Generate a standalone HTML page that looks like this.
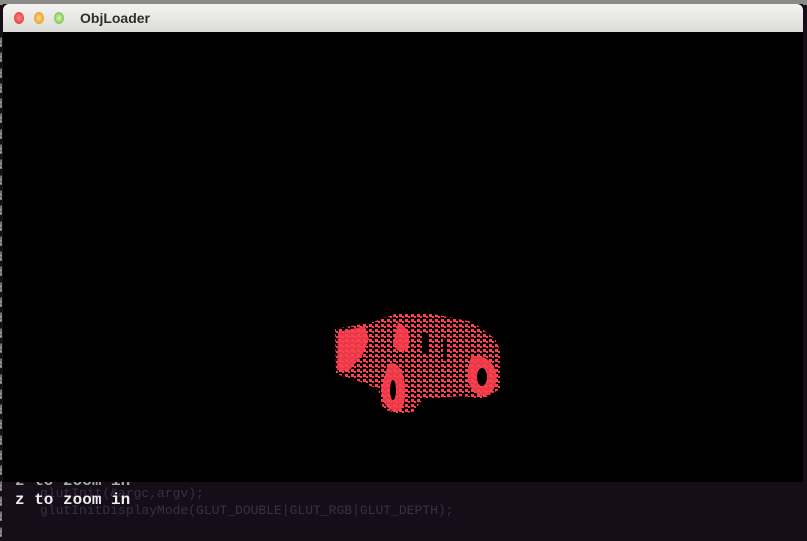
<!DOCTYPE html>
<html><head><style>
body{margin:0;width:807px;height:512px;overflow:hidden;background:#150e18;position:relative;font-family:"Liberation Sans",sans-serif}
.top{position:absolute;left:0;top:0;width:807px;height:5px;background:#8a8a86}
.win{position:absolute;left:3px;top:4px;width:800px;height:478px;background:#000}
.tb{position:absolute;left:0;top:0;width:800px;height:28px;background:linear-gradient(#f3f3f2,#dcdcd9);border-radius:6px 6px 0 0}
.b{position:absolute;top:8px;width:10px;height:12px;border-radius:50%}
.title{position:absolute;left:77px;top:6px;font-weight:bold;font-size:14px;color:#2e2e2e}
.term{position:absolute;font-family:"Liberation Mono",monospace;font-weight:bold;font-size:16px;color:#eee;white-space:pre}
.code{position:absolute;left:40px;font-family:"Liberation Mono",monospace;font-size:13px;color:#3a2f44;white-space:pre}
.ld{position:absolute;left:-5px;width:9px;font-family:"Liberation Mono",monospace;font-size:13px;line-height:15.3px;color:#bbb;top:36px;white-space:pre}
</style></head><body>
<div class="top"></div>
<div class="ld">d
d
d
d
d
d
d
d
d
d
d
d
d
d
d
d
d
d
d
d
d
d
d
d
d
d
d
d
d
d
d
d
d</div>
<div class="term" style="left:15px;top:472px;color:#aaa">z to zoom in</div>
<div class="code" style="top:486px">glutInit(&amp;argc,argv);</div>
<div class="term" style="left:15px;top:491px">z to zoom in</div>
<div class="code" style="top:503px">glutInitDisplayMode(GLUT_DOUBLE|GLUT_RGB|GLUT_DEPTH);</div>
<div class="win">
<div class="tb">
<div class="b" style="left:11px;background:radial-gradient(#f88,#d22)"></div>
<div class="b" style="left:31px;background:radial-gradient(#fd8,#d80)"></div>
<div class="b" style="left:51px;background:radial-gradient(#cfa,#6a3)"></div>
<div class="title">ObjLoader</div>
</div>
<svg width="800" height="478" style="position:absolute;left:0;top:0">
<defs>
<pattern id="p" width="6" height="5" patternUnits="userSpaceOnUse"><rect width="3" height="3" fill="#ff4050"/><rect x="3" y="2" width="2" height="2" fill="#ff4050"/></pattern>
</defs>
<g fill="url(#p)">
<path d="M332 325 L370 318 L392 310 L430 310 L470 318 L492 335 L498 348 L497 385 L480 395 L460 392 L420 395 L410 408 L395 410 L380 405 L375 385 L350 375 L333 370 Z"/>
</g>
<g fill="#ff4050" opacity="0.9">
<path d="M335 328 L362 322 L366 335 L360 350 L345 368 L334 366 Z"/>
<path d="M385 360 Q398 355 402 380 Q404 408 392 408 Q380 405 378 385 Z"/>
<path d="M468 352 Q490 350 494 372 Q492 394 478 392 Q462 385 465 365 Z"/>
<path d="M395 318 Q410 325 405 345 Q395 352 390 340 Z"/>
</g>
<g fill="#000">
<ellipse cx="390" cy="386" rx="3" ry="10"/>
<ellipse cx="479" cy="373" rx="5" ry="9"/>
<rect x="420" y="330" width="5" height="20"/>
<rect x="440" y="335" width="4" height="22"/>
</g>
</svg>
</div>
</body></html>
